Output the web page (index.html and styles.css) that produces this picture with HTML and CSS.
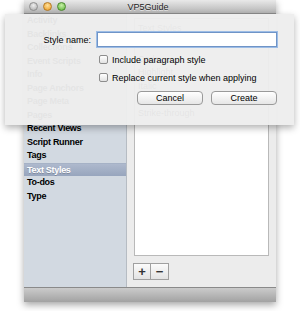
FILE: index.html
```html
<!DOCTYPE html>
<html lang="en">
<head>
    <meta charset="UTF-8">
    <title>VP5Guide</title>
    <link rel="stylesheet" href="styles.css">
</head>
<body>
    <div class="window">
        <div class="titlebar">
            <div class="lights">
                <span class="light light-close"></span>
                <span class="light light-min"></span>
                <span class="light light-zoom"></span>
            </div>
            <div class="title">VP5Guide</div>
        </div>

        <div class="main">
            <ul class="sidebar">
                <li>Activity</li>
                <li>Backlinks</li>
                <li>Collections</li>
                <li>Event Scripts</li>
                <li>Info</li>
                <li>Page Anchors</li>
                <li>Page Meta</li>
                <li>Pages</li>
                <li>Recent Views</li>
                <li>Script Runner</li>
                <li>Tags</li>
                <li class="selected">Text Styles</li>
                <li>To-dos</li>
                <li>Type</li>
            </ul>

            <div class="content">
                <div class="list-box">
                    <div class="list-header">Text Styles</div>
                    <div class="list-row">Bold</div>
                    <div class="list-row">Code</div>
                    <div class="list-row">Highlight</div>
                    <div class="list-row">Italic</div>
                    <div class="list-row">Small</div>
                    <div class="list-row">Strike-through</div>
                </div>
                <div class="add-remove">
                    <button class="small-btn">+</button>
                    <button class="small-btn">&minus;</button>
                </div>
            </div>
        </div>

        <div class="bottombar"></div>
    </div>

    <!-- sheet dropped over the window -->
    <div class="sheet">
        <div class="field-row">
            <label for="styleName" class="field-label">Style name:</label>
            <input type="text" id="styleName" class="field-input">
        </div>
        <label class="check-row"><span class="checkbox"></span>Include paragraph style</label>
        <label class="check-row"><span class="checkbox"></span>Replace current style when applying</label>
        <div class="sheet-buttons">
            <button class="push-btn">Cancel</button>
            <button class="push-btn">Create</button>
        </div>
    </div>
</body>
</html>
```

FILE: styles.css
```css
/* Global */
body {
    margin: 0;
    width: 300px;
    height: 311px;
    background-color: #ffffff;
    font-family: 'Liberation Sans', Arial, sans-serif;
    font-size: 9px;
    color: #000000;
    position: relative;
    overflow: hidden;
}

/* Window frame */
.window {
    margin-left: 24px;
    width: 252px;
    height: 302px;
    display: flex;
    flex-direction: column;
    box-shadow: 0 3px 7px rgba(0, 0, 0, 0.35);
    background-color: #ececec;
}

.titlebar {
    height: 14px;
    display: flex;
    align-items: center;
    position: relative;
    background: linear-gradient(#e9e9e9, #b4b4b4);
    border-bottom: 1px solid #8c8c8c;
    box-sizing: border-box;
}

.lights {
    display: flex;
    gap: 5px;
    padding-left: 5px;
}

.light {
    width: 9px;
    height: 9px;
    border-radius: 50%;
    box-sizing: border-box;
}

.light-close {
    background: radial-gradient(circle at 50% 35%, #eeeeee, #a9a9a9);
    border: 1px solid #8f8f8f;
}

.light-min {
    background: radial-gradient(circle at 50% 35%, #ffe19a, #e9981f);
    border: 1px solid #b57a24;
}

.light-zoom {
    background: radial-gradient(circle at 50% 35%, #c7f0a6, #5db33a);
    border: 1px solid #4a8a2e;
}

.title {
    position: absolute;
    left: 0;
    right: 4px;
    text-align: center;
    color: #222222;
    text-shadow: 0 1px 0 rgba(255, 255, 255, 0.6);
}

.main {
    flex: 1;
    display: flex;
}

/* Source list */
.sidebar {
    width: 103px;
    margin: 0;
    padding: 0;
    list-style: none;
    background-color: #d2d9e1;
    border-right: 1px solid #b6bcc3;
    box-sizing: border-box;
}

.sidebar li {
    height: 13.5px;
    line-height: 13.5px;
    padding-left: 3px;
    font-weight: bold;
    letter-spacing: -0.3px;
}

.sidebar li.selected {
    color: #ffffff;
    background: linear-gradient(#aeb9cd, #97a5bd);
    border-top: 1px solid #a6b2c6;
    box-sizing: border-box;
    line-height: 12px;
    text-shadow: 0 1px 0 rgba(0, 0, 0, 0.2);
}

.content {
    flex: 1;
    display: flex;
    flex-direction: column;
    padding: 4px 7px 7px 7px;
}

.list-box {
    flex: 1;
    background-color: #ffffff;
    border: 1px solid #b9b9b9;
    padding: 2px 3px;
}

.list-header {
    height: 14px;
    line-height: 14px;
    color: #444444;
    margin-bottom: 4px;
}

.list-row {
    height: 13.5px;
    line-height: 13.5px;
}

.add-remove {
    display: flex;
    margin-top: 7px;
    margin-left: -1px;
}

.small-btn {
    width: 18px;
    height: 17px;
    padding: 0;
    font-family: 'Liberation Sans', Arial, sans-serif;
    font-size: 13px;
    font-weight: bold;
    line-height: 13px;
    color: #333333;
    background: linear-gradient(#fbfbfb, #e3e3e3);
    border: 1px solid #a0a0a0;
}

.small-btn + .small-btn {
    border-left: none;
}

.bottombar {
    height: 15px;
    background: linear-gradient(#cbcbcb, #a2a2a2);
    border-top: 1px solid #8a8a8a;
    box-sizing: border-box;
}

/* Sheet */
.sheet {
    position: absolute;
    left: 5px;
    top: 14px;
    width: 289px;
    height: 111px;
    box-sizing: border-box;
    padding: 18px 17px 0 0;
    background-color: rgba(237, 237, 237, 0.96);
    box-shadow: 0 3px 7px rgba(0, 0, 0, 0.3);
    display: flex;
    flex-direction: column;
}

.field-row {
    display: flex;
    align-items: center;
    gap: 6px;
}

.field-label {
    width: 86px;
    text-align: right;
    font-size: 9px;
}

.field-input {
    flex: 1;
    height: 15px;
    box-sizing: border-box;
    border: 1px solid #6f94c7;
    box-shadow: 0 0 0 1px #9dbde6;
    background-color: #ffffff;
    padding: 0 3px;
    outline: none;
    font-size: 9px;
}

.check-row {
    display: flex;
    align-items: center;
    gap: 4px;
    margin-left: 94px;
    height: 9px;
    margin-top: 8px;
}

.check-row + .check-row {
    margin-top: 9px;
}

.checkbox {
    width: 9px;
    height: 9px;
    box-sizing: border-box;
    border: 1px solid #8d8d8d;
    border-radius: 2px;
    background: linear-gradient(#ffffff, #e2e2e2);
}

.sheet-buttons {
    display: flex;
    justify-content: flex-end;
    gap: 8px;
    margin-top: 9px;
}

.push-btn {
    width: 66px;
    height: 14px;
    padding: 0;
    font-family: 'Liberation Sans', Arial, sans-serif;
    font-size: 9px;
    line-height: 12px;
    color: #000000;
    background: linear-gradient(#ffffff, #e6e6e6);
    border: 1px solid #9a9a9a;
    border-radius: 4px;
}
```
